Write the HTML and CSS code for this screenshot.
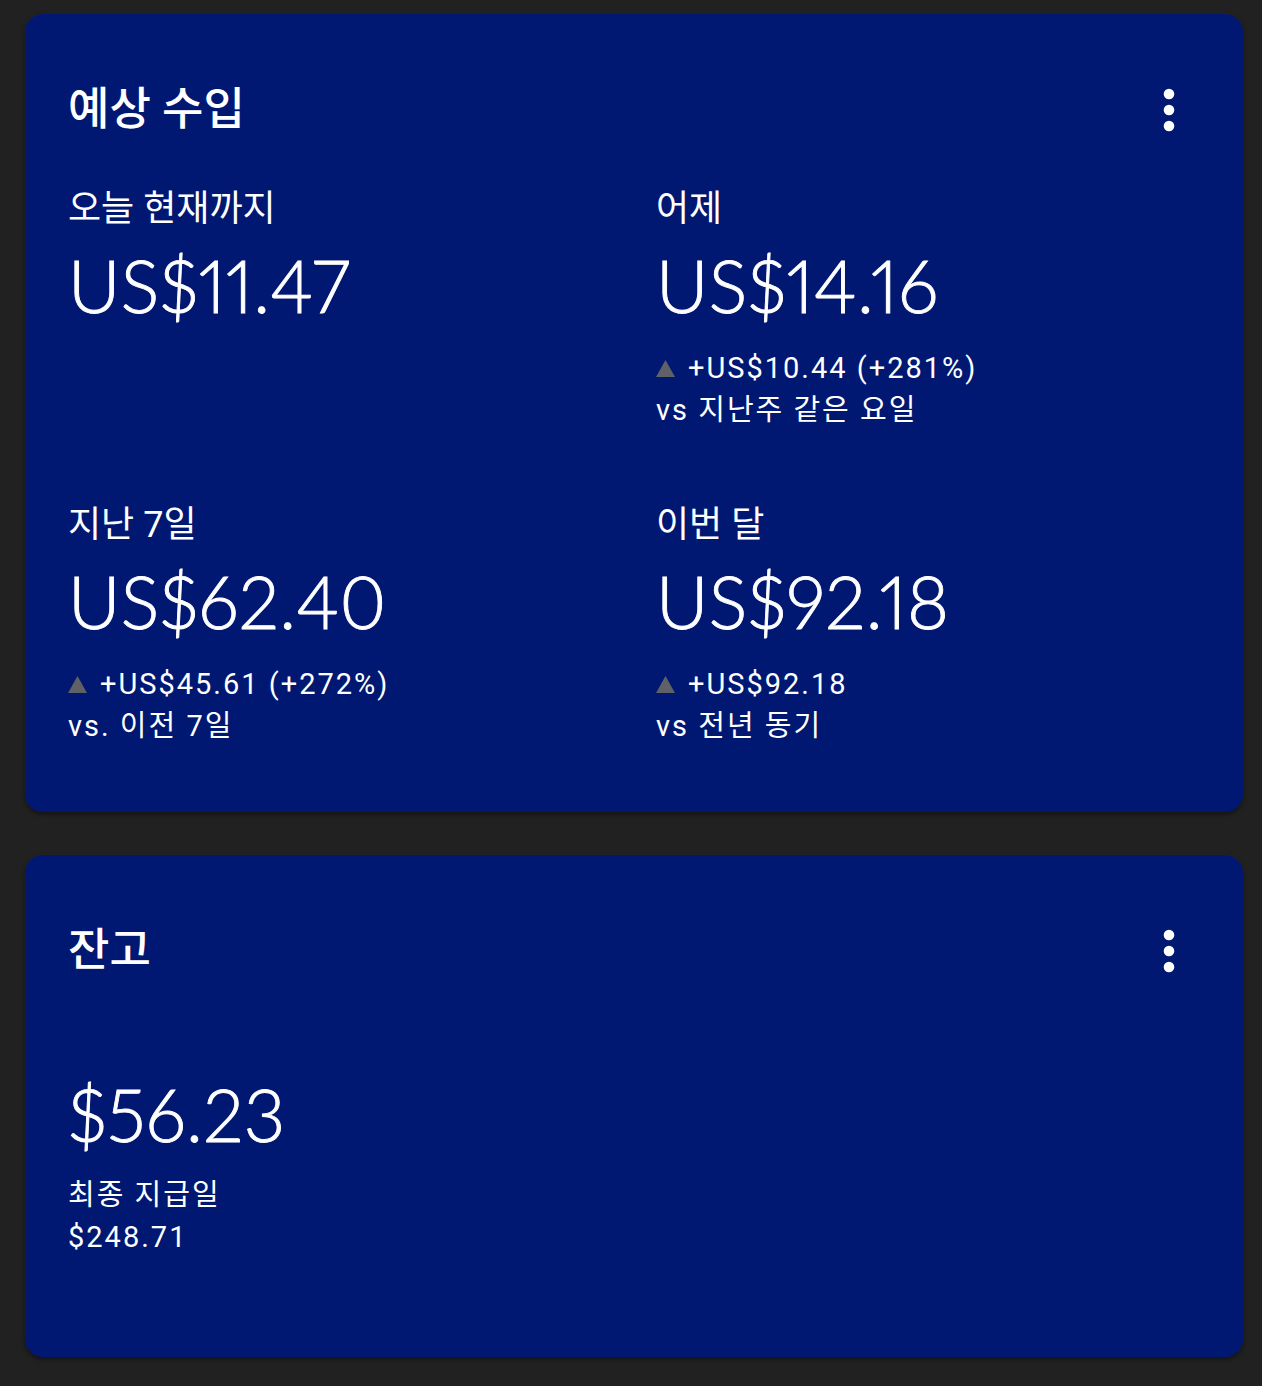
FILE: index.html
```html
<!DOCTYPE html>
<html lang="ko">
<head>
    <meta charset="UTF-8">
    <meta name="viewport" content="width=device-width, initial-scale=1.0">
    <title>예상 수입</title>
    <link rel="stylesheet" href="styles.css">
</head>
<body>
    <section class="card earnings">
        <div class="card-head">
            <h2 class="card-title">예상 수입</h2>
            <svg class="more" viewBox="0 0 24 24" aria-hidden="true">
                <circle cx="12" cy="6" r="2"/>
                <circle cx="12" cy="12" r="2"/>
                <circle cx="12" cy="18" r="2"/>
            </svg>
        </div>
        <div class="stats">
            <div class="stat">
                <div class="stat-label">오늘 현재까지</div>
                <div class="stat-value">US$11.47</div>
            </div>
            <div class="stat">
                <div class="stat-label">어제</div>
                <div class="stat-value">US$14.16</div>
                <div class="stat-note">
                    <div class="delta"><svg class="up" viewBox="0 0 19 17"><polygon points="9.5,0 19,17 0,17"/></svg>+US$10.44 (+281%)</div>
                    <div>vs 지난주 같은 요일</div>
                </div>
            </div>
            <div class="stat">
                <div class="stat-label">지난 7일</div>
                <div class="stat-value">US$62.40</div>
                <div class="stat-note">
                    <div class="delta"><svg class="up" viewBox="0 0 19 17"><polygon points="9.5,0 19,17 0,17"/></svg>+US$45.61 (+272%)</div>
                    <div>vs. 이전 7일</div>
                </div>
            </div>
            <div class="stat">
                <div class="stat-label">이번 달</div>
                <div class="stat-value">US$92.18</div>
                <div class="stat-note">
                    <div class="delta"><svg class="up" viewBox="0 0 19 17"><polygon points="9.5,0 19,17 0,17"/></svg>+US$92.18</div>
                    <div>vs 전년 동기</div>
                </div>
            </div>
        </div>
    </section>

    <section class="card balance">
        <div class="card-head">
            <h2 class="card-title">잔고</h2>
            <svg class="more" viewBox="0 0 24 24" aria-hidden="true">
                <circle cx="12" cy="6" r="2"/>
                <circle cx="12" cy="12" r="2"/>
                <circle cx="12" cy="18" r="2"/>
            </svg>
        </div>
        <div class="stat-value balance-value">$56.23</div>
        <div class="stat-note balance-note">
            <div>최종 지급일</div>
            <div>$248.71</div>
        </div>
    </section>
</body>
</html>
```

FILE: styles.css
```css
body {
    margin: 0;
    padding: 14px 19px 28px 25px;
    background-color: #212121;
    color: #fff;
    font-family: Roboto, "Noto Sans CJK KR", sans-serif;
}
.card {
    background-color: #001872;
    border-radius: 18px;
    padding: 68px 42px 65px 43px;
    box-shadow: 0 2px 4px rgba(0, 0, 0, 0.5), 0 0 2px rgba(255, 255, 255, 0.08);
}
.card + .card {
    margin-top: 43px;
}
.card-head {
    display: flex;
    align-items: center;
    justify-content: space-between;
    height: 56px;
}
.card-title {
    margin: 0;
    font-size: 45px;
    font-weight: 500;
    line-height: 56px;
}
.more {
    width: 64px;
    height: 64px;
    fill: #fff;
}
.stats {
    display: grid;
    grid-template-columns: 588px 1fr;
    row-gap: 72px;
    margin-top: 49px;
}
.stat-label {
    font-size: 36px;
    line-height: 44px;
}
.stat-value {
    margin-top: 9px;
    font-family: Lato, Roboto, sans-serif;
    font-weight: 300;
    font-size: 72px;
    line-height: 90px;
    letter-spacing: 0.3px;
    font-variant-numeric: proportional-nums;
    -webkit-text-stroke: 0.9px #fff;
}
.stat-note {
    margin-top: 17px;
    font-size: 29px;
    line-height: 42px;
    letter-spacing: 2px;
}
.delta {
    display: flex;
    align-items: center;
}
.up {
    width: 19px;
    height: 17px;
    margin-right: 13px;
    fill: #5f6166;
}
.balance {
    padding-bottom: 99px;
}
.balance-value {
    margin-top: 90px;
}
.balance-note {
    margin-top: 15px;
}
```
